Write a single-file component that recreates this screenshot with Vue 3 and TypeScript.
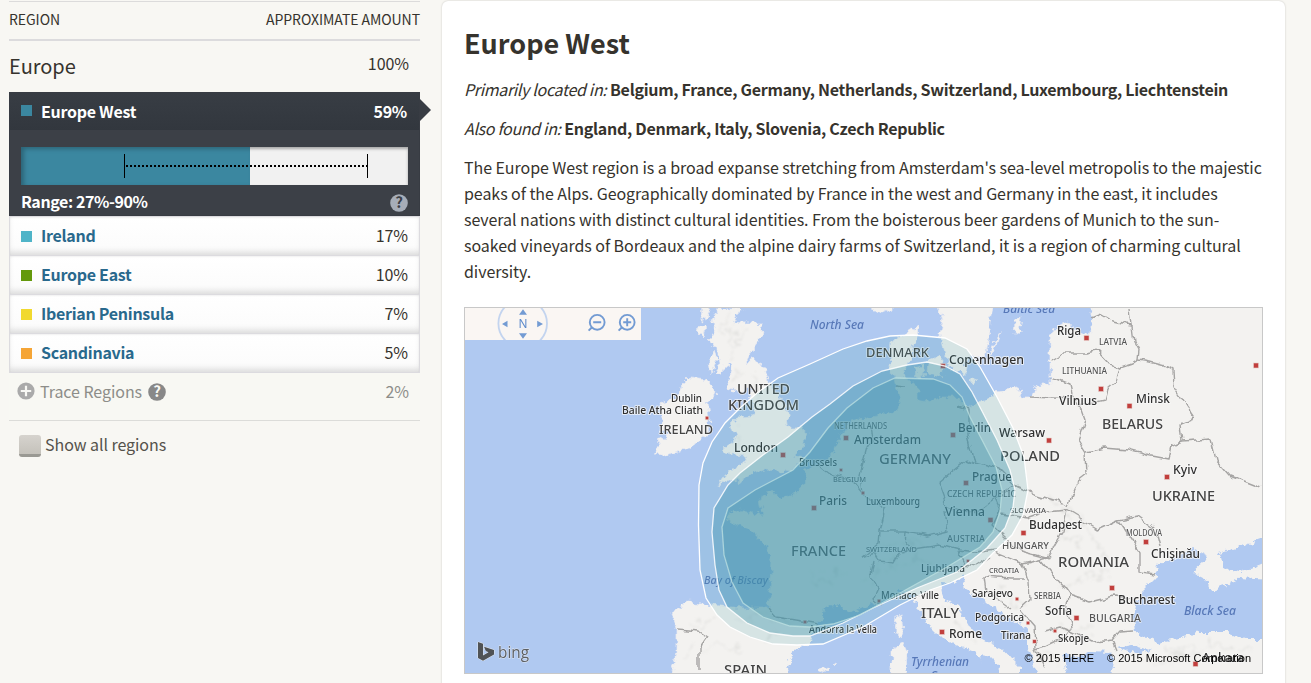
<script setup lang="ts">
interface Region { name: string; pct: string; color: string }
interface Label { t: string; x: number; y: number; w: number; s: number; k?: string }

const regions: Region[] = [
  { name: 'Ireland', pct: '17%', color: '#4fb4c8' },
  { name: 'Europe East', pct: '10%', color: '#64990c' },
  { name: 'Iberian Peninsula', pct: '7%', color: '#f1d92f' },
  { name: 'Scandinavia', pct: '5%', color: '#f5a536' },
]

// Labels drawn on the map itself, below the tinted region shapes
const labels: Label[] = [
  { t: 'North Sea', x: 810, y: 329, w: 54, s: 12, k: 'sea' },
  { t: 'Baltic Sea', x: 1003, y: 313, w: 52, s: 11.5, k: 'sea' },
  { t: 'Bay of Biscay', x: 704, y: 584, w: 64, s: 11.5, k: 'sea' },
  { t: 'Tyrrhenian', x: 911, y: 666, w: 58, s: 12, k: 'sea' },
  { t: 'Sea', x: 931, y: 680, w: 20, s: 12, k: 'sea' },
  { t: 'Black Sea', x: 1184, y: 615, w: 52, s: 12, k: 'sea' },
  { t: 'UNITED', x: 737, y: 394, w: 53, s: 14, k: 'big' },
  { t: 'KINGDOM', x: 728, y: 409.5, w: 71, s: 14, k: 'big' },
  { t: 'IRELAND', x: 659, y: 434, w: 54, s: 13, k: 'big' },
  { t: 'DENMARK', x: 866, y: 357, w: 63, s: 12.5, k: 'big' },
  { t: 'GERMANY', x: 879, y: 463.5, w: 72, s: 14, k: 'big' },
  { t: 'FRANCE', x: 791, y: 556, w: 55, s: 14, k: 'big' },
  { t: 'SPAIN', x: 724, y: 675, w: 43, s: 14, k: 'big' },
  { t: 'ITALY', x: 921, y: 618, w: 38, s: 14, k: 'big' },
  { t: 'POLAND', x: 1000, y: 461, w: 60, s: 13.5, k: 'big' },
  { t: 'BELARUS', x: 1102, y: 428.5, w: 61, s: 14, k: 'big' },
  { t: 'UKRAINE', x: 1152, y: 501, w: 63, s: 13.5, k: 'big' },
  { t: 'ROMANIA', x: 1058, y: 567, w: 71, s: 13.5, k: 'big' },
  { t: 'LATVIA', x: 1099, y: 345, w: 28, s: 8.5, k: 'small' },
  { t: 'LITHUANIA', x: 1062, y: 374, w: 45, s: 8.5, k: 'small' },
  { t: 'NETHERLANDS', x: 834, y: 429, w: 53, s: 8, k: 'small' },
  { t: 'BELGIUM', x: 833, y: 482, w: 33, s: 7.5, k: 'small' },
  { t: 'CZECH REPUBLIC', x: 947, y: 497, w: 69, s: 8.5, k: 'small' },
  { t: 'SLOVAKIA', x: 1010, y: 512.5, w: 36, s: 7.5, k: 'small' },
  { t: 'AUSTRIA', x: 947, y: 542, w: 38, s: 9, k: 'small' },
  { t: 'SWITZERLAND', x: 866, y: 552, w: 51, s: 7.5, k: 'small' },
  { t: 'HUNGARY', x: 1002, y: 549, w: 47, s: 9.5, k: 'small' },
  { t: 'CROATIA', x: 989, y: 573, w: 30, s: 7.5, k: 'small' },
  { t: 'SERBIA', x: 1034, y: 598.5, w: 27, s: 9, k: 'small' },
  { t: 'BULGARIA', x: 1089, y: 622, w: 52, s: 10.5, k: 'small' },
  { t: 'MOLDOVA', x: 1126, y: 535.5, w: 36, s: 8, k: 'small' },
  { t: 'Dublin', x: 671, y: 402, w: 31, s: 10.5 },
  { t: 'Baile Atha Cliath', x: 622, y: 414, w: 81, s: 10.5 },
  { t: 'London', x: 734, y: 452, w: 44, s: 12.5 },
  { t: 'Copenhagen', x: 949, y: 364, w: 75, s: 12.5 },
  { t: 'Amsterdam', x: 854, y: 444, w: 67, s: 12.5 },
  { t: 'Brussels', x: 799, y: 466, w: 38, s: 10 },
  { t: 'Berlin', x: 958, y: 432, w: 33, s: 12.5 },
  { t: 'Prague', x: 972, y: 481, w: 40, s: 12.5 },
  { t: 'Paris', x: 819, y: 505, w: 28, s: 12.5 },
  { t: 'Luxembourg', x: 866, y: 505, w: 54, s: 10 },
  { t: 'Vienna', x: 945, y: 516, w: 40, s: 12.5 },
  { t: 'Ljubljana', x: 921, y: 572, w: 44, s: 10.5 },
  { t: 'Monaco-Ville', x: 881, y: 599, w: 58, s: 10 },
  { t: 'Andorra la Vella', x: 809, y: 633, w: 68, s: 10 },
  { t: 'Rome', x: 949, y: 638, w: 33, s: 12.5 },
  { t: 'Riga', x: 1057, y: 335, w: 24, s: 12.5 },
  { t: 'Vilnius', x: 1059, y: 405, w: 38, s: 12.5 },
  { t: 'Minsk', x: 1136, y: 403, w: 34, s: 12.5 },
  { t: 'Warsaw', x: 999, y: 437, w: 46, s: 12.5 },
  { t: 'Kyiv', x: 1173, y: 474, w: 24, s: 12.5 },
  { t: 'Budapest', x: 1029, y: 529, w: 53, s: 12.5 },
  { t: 'Chişinău', x: 1151, y: 558, w: 49, s: 12 },
  { t: 'Bucharest', x: 1118, y: 604, w: 57, s: 12.5 },
  { t: 'Sarajevo', x: 972, y: 597, w: 41, s: 10.5 },
  { t: 'Podgorica', x: 975, y: 621, w: 49, s: 10.5 },
  { t: 'Tirana', x: 1001, y: 638.5, w: 30, s: 10.5 },
  { t: 'Sofia', x: 1045, y: 615, w: 27, s: 12 },
  { t: 'Skopje', x: 1058, y: 642, w: 31, s: 10.5 },
  { t: 'Ankara', x: 1202, y: 662, w: 42, s: 12 },
]

// City markers: x, y, size
const dots: number[][] = [
  [707, 418, 3.5], [783, 455, 5], [943, 366, 5], [846, 438, 5], [841, 470, 3], [953, 435, 5],
  [966, 483, 5], [814, 508, 5], [863, 493, 3.5], [990.5, 520, 5], [968, 561, 3], [879, 601, 3.5],
  [805, 622, 3.5], [942, 632, 5], [1086.5, 338, 5], [1101, 389, 5], [1129.5, 406, 5], [1049, 440.5, 5],
  [1167, 477, 5], [1023.5, 533, 5], [1146, 542, 5], [1112, 588, 5], [1076.5, 618, 5], [1017, 599, 3.5],
  [1028, 623, 3.5], [1034.5, 641.5, 3.5], [1055, 631, 3.5], [1256, 365.5, 5], [1195.5, 664, 5],
]

const land: string[] = [
  // Great Britain
  'M743 308 737 315 733 322 745 323 763 323 761 337 750 352 745 362 755 360 765 367 768 382 778 396 787 408 789 420 786 427 802 427 807 435 803 447 795 455 806 458 797 467 783 472 767 470 753 473 747 477 740 482 732 478 717 486 728 472 743 463 747 456 732 455 722 450 733 442 737 433 728 427 737 418 752 417 755 412 750 400 752 388 740 392 725 388 730 377 732 368 728 363 723 373 716 373 720 363 717 350 710 340 717 330 712 320 718 308Z',
  // Ireland
  'M690 377 708 379 717 395 707 402 709 417 708 435 690 447 668 455 655 453 660 443 657 442 673 433 660 430 662 417 660 403 677 398 682 385Z',
  // Continental Europe
  'M672 673 677 652 677 628 670 613 687 602 710 605 743 608 768 608 771 582 772 558 763 542 750 530 732 523 727 515 738 510 763 515 760 498 772 490 777 498 790 497 800 488 805 485 807 468 823 463 833 452 843 433 850 422 873 417 897 412 900 400 897 388 895 380 890 367 892 343 900 337 918 325 917 337 913 350 908 363 903 375 917 387 917 400 930 402 942 397 957 397 968 407 990 398 997 391 1017 387 1022 397 1032 397 1037 385 1050 385 1050 360 1050 337 1058 325 1068 322 1080 335 1091 333 1091 300 1272 300 1272 683 672 683Z',
  // Sweden and Norway
  'M935 300 943 320 940 333 945 353 952 372 965 373 967 358 985 356 988 343 990 320 995 300Z',
  'M870 300 892 300 892 309 882 313 872 310Z',
  // Danish islands, Gotland, Oland, Bornholm
  'M928 361 938 357 944 364 941 375 933 378 927 370Z', 'M914 368 922 366 925 375 917 378Z',
  'M1015 321 1022 316 1020 331 1014 336Z', 'M1000 331 992 354 989 356 996 338Z', 'M971 378 976 380 974 383 970 381Z',
  // Hebrides
  'M702 306 710 309 707 318 701 321Z', 'M696 330 705 326 703 337Z', 'M708 362 714 352 717 360 710 374Z',
]

const seas: string[] = [
  'M782 683 793 652 810 642 815 625 823 618 825 608 833 604 853 613 863 608 880 602 900 592 913 595 917 605 927 622 947 642 967 648 980 657 987 683Z',
  'M940 582 953 583 963 575 966 590 980 597 1000 612 1020 624 1027 632 1027 645 1033 658 1038 683 1020 683 1020 668 1011 659 1000 647 980 637 970 628 957 605 943 598Z',
  'M980 655 991 657 998 664 1001 683 984 683Z',
  'M1192 548 1177 557 1158 565 1155 578 1145 588 1137 602 1133 618 1135 632 1157 643 1180 638 1200 632 1227 632 1247 640 1272 640 1272 579 1240 577 1227 585 1210 590 1205 578 1193 572 1203 563 1207 556Z',
  'M1272 536 1240 547 1219 553 1222 568 1240 573 1255 568 1272 561Z',
  'M1062 654 1078 657 1090 651 1110 652 1114 660 1110 683 1070 683Z',
  'M1118 647 1132 644 1152 650 1136 654Z',
]

const islands: string[] = [
  'M902 615 904 632 900 639 894 628 896 618Z', 'M892 648 903 643 907 652 906 683 892 683Z',
  'M818 671 826 666 829 669 822 673Z', 'M833 663 838 664 836 666Z',
]

// Faint shading over the mountain ranges
const relief: string[] = [
  'M735 325 728 345M745 330 730 355M725 315 722 335M740 368 733 384M755 375 758 398M740 432 742 448',
  'M735 620 765 616 790 622M690 625 715 618M700 655 720 645 745 652M765 640 780 632M685 660 690 645',
  'M870 580 878 565 900 562 930 560M880 548 900 544 925 545M815 575 830 585 838 570M945 605 955 620 972 640',
  'M1050 500 1070 512 1090 530 1105 555M1060 590 1085 577 1110 578M1065 535 1080 545M1000 590 1020 605',
  'M1060 625 1090 628M1150 665 1180 655 1215 645 1250 655M1160 650 1190 650M1050 650 1060 668',
]

const borders: string[] = [
  'M1091 318 1101 314 1113 321 1125 324 1132 325 1134 341 1139 350 1138 360 1150 362 1165 366 1173 370 1174 386 1186 405 1195 418 1180 424 1182 441 1171 446 1168 459 1147 455 1128 450 1105 448 1087 452',
  'M1132 325 1130 308', 'M1050 360 1062 353 1085 353 1098 351 1111 365 1120 368 1132 364 1138 360',
  'M1120 368 1116 382 1108 389 1105 400 1080 406 1072 393 1070 384 1052 377', 'M1032 396 1072 398',
  'M1080 406 1085 420 1078 440 1086 453 1087 475 1078 482 1068 506',
  'M1182 441 1211 439 1216 460 1229 475 1262 488',
  'M959 407 968 410 968 435 975 463 1000 470 1015 485 1037 495 1067 504',
  'M966 460 975 464M966 460 938 483 947 508 975 514 995 499 1015 485',
  'M995 499 1000 510 993 525 1005 537 1020 551 1047 558 1063 531 1067 510 1045 512 1028 518 1000 514',
  'M1067 510 1098 529 1118 520 1140 552 1140 572 1155 574', 'M1118 520 1138 516 1154 528 1159 547',
  'M1047 558 1023 564 1005 557 993 552', 'M1040 560 1055 578 1064 588 1069 595 1090 602 1114 596 1135 600',
  'M1023 564 1029 582 1030 600 1020 609', 'M984 577 1010 579 1025 579M984 577 986 591 1012 610',
  'M1069 595 1067 612 1072 628 1064 638 1045 647 1036 650 1035 626 1022 611',
  'M1045 631 1060 627 1072 632 1094 642 1112 640 1120 631 1135 630',
  'M945 511 948 531 928 536 906 532 905 543 914 549 940 545 958 550 975 552 996 549',
  'M906 532 880 532 879 544 862 557', 'M862 557 875 553 880 561 894 563 900 552 914 549M874 561 871 575 878 588 873 599 880 605',
  'M880 532 885 508 862 495 850 480 830 474 818 465', 'M862 495 860 474 866 451 873 440 871 425',
  'M768 608 776 617 795 620 819 624', 'M676 630 700 632 708 637 699 650 699 670',
  'M896 386 906 387', 'M958 550 965 564 975 566 990 556', 'M1035 650 1045 668', 'M1112 640 1116 650',
]

// Tinted genetic-region contours, outermost first
const zones: { d: string; cls: string }[] = [
  { cls: 'zone outer', d: 'M699 485 703 463 712 442 725 423 740 408 757 393 778 378 810 364 843 349 867 341 890 336 913 335 945 338 967 349 980 367 997 397 1013 428 1024 457 1028 490 1023 515 1012 535 993 553 977 570 950 583 930 590 900 605 863 627 823 644 797 645 773 644 750 637 730 627 717 615 706 598 700 570 698.5 525Z' },
  { cls: 'zone mid', d: 'M728 485 740 473 763 455 788 437 812 417 830 404 853 386 882 371 907 365 927 362 945 366 960 374 972 392 983 413 997 440 1010 470 1015 490 1013 507 1005 528 987 548 957 572 917 588 873 608 843 623 810 636 793 636 770 633 747 623 727 607 719 590 715 565 712 532 714 508Z' },
  { cls: 'zone inner', d: 'M728 508 755 490 793 470 810 452 828 428 847 408 873 388 895 378 933 379 950 385 962 397 970 417 982 440 996 467 1002 490 1000 512 993 532 980 547 947 567 900 593 860 615 833 624 810 627 790 626 763 617 743 603 732 582 724 555 722 527Z' },
]
</script>

<template>
  <div class="page">
    <aside class="side">
      <div class="head"><span>REGION</span><span>APPROXIMATE AMOUNT</span></div>
      <div class="group"><span class="gname">Europe</span><span class="gpct">100%</span></div>
      <section class="active">
        <div class="arow">
          <i class="sw teal"></i><b>Europe West</b><b class="pct">59%</b>
        </div>
        <svg class="arrow" width="11" height="22" viewBox="0 0 11 22"><path d="M0 0 11 11 0 22Z" fill="#383d44" /></svg>
        <div class="bar">
          <div class="fill"></div>
          <div class="range"></div>
        </div>
        <div class="rrow">
          <b>Range: 27%-90%</b>
          <svg width="18" height="18" viewBox="0 0 18 18"><circle cx="9" cy="9" r="8.8" fill="#a6adb8" /><text x="9" y="14" class="q" fill="#3c4047">?</text></svg>
        </div>
      </section>
      <div v-for="r in regions" :key="r.name" class="row">
        <i class="sw" :style="{ background: r.color }"></i><b>{{ r.name }}</b><span class="pct">{{ r.pct }}</span>
      </div>
      <div class="trace">
        <svg width="18" height="18" viewBox="0 0 18 18"><circle cx="9" cy="9" r="8.6" fill="#aaa" /><path d="M9 3.8V14.2M3.8 9H14.2" stroke="#f8f8f4" stroke-width="2.2" /></svg>
        <span class="tname">Trace Regions</span>
        <svg width="18" height="18" viewBox="0 0 18 18"><circle cx="9" cy="9" r="8.8" fill="#888" /><text x="9" y="14" class="q" fill="#f8f8f4">?</text></svg>
        <span class="pct">2%</span>
      </div>
      <label class="show"><span class="check"></span><span class="slabel">Show all regions</span></label>
    </aside>

    <main class="card">
      <h1>Europe West</h1>
      <p class="loc l1"><em>Primarily located in:</em> <b>Belgium, France, Germany, Netherlands, Switzerland, Luxembourg, Liechtenstein</b></p>
      <p class="loc l2"><em>Also found in:</em> <b>England, Denmark, Italy, Slovenia, Czech Republic</b></p>
      <p class="desc">
        The Europe West region is a broad expanse stretching from Amsterdam's sea-level metropolis to the majestic<br>
        peaks of the Alps. Geographically dominated by France in the west and Germany in the east, it includes<br>
        several nations with distinct cultural identities. From the boisterous beer gardens of Munich to the sun-<br>
        soaked vineyards of Bordeaux and the alpine dairy farms of Switzerland, it is a region of charming cultural<br>
        diversity.
      </p>
      <div class="map">
        <svg width="797" height="365" viewBox="465 308 797 365">
          <defs>
            <filter id="coast" filterUnits="userSpaceOnUse" x="455" y="298" width="820" height="390">
              <feTurbulence type="fractalNoise" baseFrequency="0.16" numOctaves="3" seed="4" />
              <feDisplacementMap in="SourceGraphic" scale="9" xChannelSelector="R" yChannelSelector="G" />
            </filter>
            <filter id="wiggle" filterUnits="userSpaceOnUse" x="455" y="298" width="820" height="390">
              <feTurbulence type="fractalNoise" baseFrequency="0.11" numOctaves="1" seed="7" />
              <feDisplacementMap in="SourceGraphic" scale="9" xChannelSelector="R" yChannelSelector="G" />
            </filter>
            <filter id="soft" filterUnits="userSpaceOnUse" x="455" y="298" width="820" height="390">
              <feTurbulence type="fractalNoise" baseFrequency="0.09" numOctaves="3" seed="2" />
              <feDisplacementMap in="SourceGraphic" scale="26" xChannelSelector="R" yChannelSelector="G" />
              <feGaussianBlur stdDeviation="0.8" />
            </filter>
          </defs>
          <rect x="465" y="308" width="797" height="365" fill="#b0c9f1" />
          <g filter="url(#coast)">
            <path v-for="d in land" :key="d" :d="d" class="land" />
            <path v-for="d in seas" :key="d" :d="d" class="water" />
            <path v-for="d in islands" :key="d" :d="d" class="land" />
          </g>
          <g filter="url(#soft)"><path v-for="d in relief" :key="d" :d="d" class="relief" /></g>
          <g filter="url(#wiggle)"><path v-for="d in borders" :key="d" :d="d" class="border" /></g>
          <rect v-for="(c, i) in dots" :key="i" :x="c[0] - c[2] / 2" :y="c[1] - c[2] / 2" :width="c[2]" :height="c[2]" class="dot" />
          <text v-for="l in labels" :key="l.t" :x="l.x" :y="l.y" :font-size="l.s" :textLength="l.w" lengthAdjust="spacingAndGlyphs" :class="['lb', l.k]">{{ l.t }}</text>
          <path v-for="z in zones" :key="z.cls" :d="z.d" :class="z.cls" />

          <rect x="465" y="308" width="176" height="32" fill="#faf6f3" />
          <svg x="465" y="308" width="176" height="32" viewBox="465 308 176 32">
            <circle cx="522.7" cy="323.5" r="24.3" fill="none" stroke="#c3d4ef" stroke-width="1.8" />
            <g fill="#739bd3">
              <path d="M523 309.3 527 314.8H519ZM523 338.7 527 333.2H519ZM502 324 507.5 320.7V327.3ZM543 324 537.2 320.7V327.3Z" />
            </g>
            <text x="518.5" y="328" font-size="12.5" textLength="9" lengthAdjust="spacingAndGlyphs" class="north">N</text>
            <g fill="none" stroke="#739bd3" stroke-width="1.9">
              <circle cx="597.2" cy="322.3" r="7.4" /><path d="M593.2 322.3H601.2M591.8 327.5 588.6 330.7" />
              <circle cx="627.2" cy="322.3" r="7.4" /><path d="M623.2 322.3H631.2M627.2 318.3V326.3M621.8 327.5 618.6 330.7" />
            </g>
          </svg>
          <path d="M478 642 483 643.7V655.4L488.5 652.2 485.8 650.9 484 646.8 494 649.9V654.5L483 660.8 478 658Z" fill="#505356" stroke="#e4e8ee" stroke-width="1" paint-order="stroke" />
          <text x="498" y="657.5" font-size="16" textLength="31" lengthAdjust="spacingAndGlyphs" class="bing">bing</text>
          <text x="1024.5" y="662" textLength="69.5" class="copy">© 2015 HERE</text>
          <text x="1107" y="662" textLength="144" class="copy">© 2015 Microsoft Corporation</text>
        </svg>
      </div>
    </main>
  </div>
</template>

<style>
html, body { margin: 0; background: #f8f7f3; overflow: hidden; }
</style>

<style scoped>
.page { width: 1311px; height: 683px; overflow: hidden; display: flex; background: #f8f7f3; color: #36332d; font-family: "Noto Sans CJK SC", "Noto Sans", sans-serif; font-size: 16px; letter-spacing: -.06px; }
.page svg { letter-spacing: 0; }
b { letter-spacing: -.28px; }
em { letter-spacing: -.33px; }
.side { width: 411px; margin: 1px 22px 0 9px; flex: none; }
.head { box-sizing: border-box; height: 40px; border-top: 1px solid #dcdbdb; border-bottom: 2px solid #dcdbdd; display: flex; justify-content: space-between; line-height: 35px; font-size: 14px; }
.group { height: 51px; display: flex; justify-content: space-between; }
.gname { font-size: 20px; line-height: 49px; }
.gpct { line-height: 45px; margin-right: 11px; }
.active { position: relative; height: 124px; background: #3c4047; color: #fff; box-sizing: border-box; border: 1px solid #383c43; }
.arow { height: 37px; padding: 0 12px 0 11px; display: flex; align-items: center; background: linear-gradient(#383d44, #32373e); }
.arow b { margin-top: -2px; }
.arrow { position: absolute; left: 410px; top: 6px; }
.sw { width: 11px; height: 11px; margin: 1px 9px 0 0; flex: none; }
.teal { margin-top: -2px; background: #3b87a0; }
.pct { margin-left: auto; }
.bar { position: relative; margin: 17px 11px 0; width: 387px; height: 38px; background: #f1f1f1; box-shadow: inset 0 2px 3px rgba(0, 0, 0, .3); }
.fill { height: 38px; width: 229px; background: #3b87a0; box-shadow: inset 3px 2px 4px rgba(0, 0, 0, .25); }
.range { position: absolute; left: 103px; top: 7px; width: 242px; height: 24px; border: solid #000; border-width: 0 1px; background: repeating-linear-gradient(90deg, #000 0 2px, transparent 2px 4px) 1px 11px / 241px 2px no-repeat; }
.rrow { display: flex; justify-content: space-between; align-items: center; height: 32px; padding: 2px 11px 0; line-height: 30px; }
.rrow b { margin-top: -4px; letter-spacing: -.42px; }
.q { font: bold 15px "Noto Sans CJK SC", sans-serif; text-anchor: middle; }
.row { box-sizing: border-box; height: 39px; padding: 0 11px; border: 1px solid #dcdbdf; border-top-width: 0; display: flex; align-items: center; background: linear-gradient(#fff, #fbfbfb); box-shadow: inset 0 -5px 6px -2px rgba(0, 0, 0, .13), inset 0 1px 2px rgba(0, 0, 0, .06); }
.active + .row { height: 40px; border-top-width: 1px; }
.row > b, .row > span { margin-top: -2px; }
.row b { color: #29698d; }
.trace { box-sizing: border-box; height: 48px; padding: 0 11px 10px 9px; border-bottom: 1px solid #dcdcd9; display: flex; align-items: center; color: #8d8d89; background: #f8f8f3; }
.trace > span { margin-top: -1px; }
.trace > svg:first-child { margin: -1px 0 0 -1px; }
.tname { margin: 0 6px 0 5px; }
.show { display: flex; align-items: center; height: 50px; padding-left: 10px; color: #55524b; }
.slabel { margin-top: -5px; }
.check { width: 22px; height: 22px; margin-right: 4px; box-sizing: border-box; border-radius: 3px; background: linear-gradient(#d6d3ce, #c5c2bb); border-bottom: 3px solid #9a9993; }
.card { box-sizing: border-box; width: 843px; height: 700px; margin-top: 1px; padding: 0 22px; background: #fff; border-radius: 6px; box-shadow: 0 0 2px rgba(0, 0, 0, .22); flex: none; }
h1 { margin: 0; padding-top: 22px; height: 46px; line-height: 40px; font-size: 27px; letter-spacing: 0; white-space: nowrap; }
p { margin: 0; line-height: 26px; white-space: nowrap; }
.loc { height: 39px; }
.l1 { padding-top: 7px; }
.map { margin-top: 23px; box-sizing: border-box; width: 799px; height: 367px; border: 1px solid #c8c8c8; overflow: hidden; }
.map svg { display: block; }
.land { fill: #f3f2f0; stroke: #e8eaf0; stroke-width: .7; }
.water { fill: #b0c9f1; }
.relief { fill: none; stroke: #d9d8d5; stroke-width: 1.6; opacity: .7; }
.border { fill: none; stroke: #a5a4a3; stroke-width: 1.4; stroke-linejoin: round; }
.dot { fill: #c13f3d; stroke: #e7cfcb; stroke-width: .6; }
.lb { font-family: "Noto Sans", sans-serif; font-weight: 500; fill: #303030; stroke: rgba(248, 248, 248, .75); stroke-width: 2px; paint-order: stroke; stroke-linejoin: round; }
.big { fill: #444; stroke-width: 1.6px; }
.small { fill: #555; stroke-width: 1.3px; }
.sea { font-style: italic; fill: #5778b8; stroke: none; }
.zone { stroke-width: 1.3; }
.outer { fill: rgba(70, 160, 170, .17); stroke: #fff; }
.mid { fill: rgba(55, 142, 168, .35); stroke: rgba(255, 255, 255, .85); }
.inner { fill: rgba(68, 145, 168, .33); stroke: rgba(190, 225, 225, .75); }
.north { font-family: "Noto Sans", sans-serif; fill: #5b89cb; }
.bing { font-family: "Open Sans", sans-serif; fill: #5c5f63; stroke: #dfe6f2; stroke-width: 1px; paint-order: stroke; }
.copy { font: 11px "Liberation Sans", sans-serif; fill: #000; }
</style>
